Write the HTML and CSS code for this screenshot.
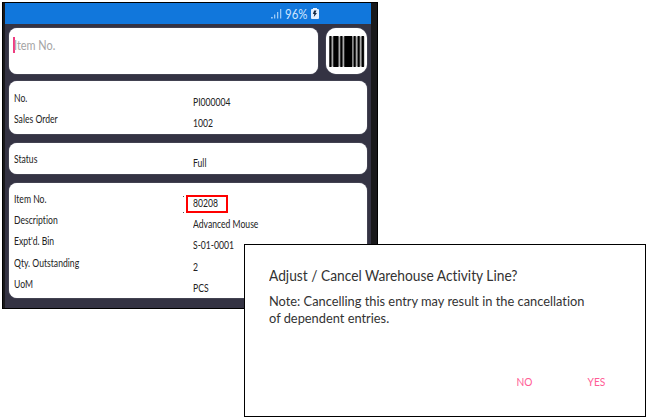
FILE: index.html
```
<!DOCTYPE html>
<html lang="en">
<head>
<meta charset="utf-8">
<title>Warehouse Activity</title>
<link rel="stylesheet" href="styles.css">
</head>
<body>
<main class="phone">
  <div class="screen">
    <header class="status-bar">
      <svg class="signal" width="11" height="11" viewBox="0 0 11 11"><path d="M0 9h1.800v1.500H0z"/><path d="M3 6.500h1.300v4H3zM6 4h1.300v6.500H6zM9 1h1.300v9.500H9z"/></svg>
      <span class="percent">96%</span>
      <svg class="battery" width="8" height="11" viewBox="0 0 8 11"><path d="M2 0h4v1h1.300l.7.7v8.600l-.7.7H.7L0 10.300V1.700L.7 1H2z"/><path class="bolt" d="M5.500 2.500H3.200L1.800 6h1.500l-.5 3L6 5H4.400z"/></svg>
    </header>
    <div class="content">
      <div class="search">
        <div class="field"><i class="caret"></i><span class="placeholder">Item No.</span></div>
        <button class="scan" aria-label="Scan">
          <svg width="36" height="31" viewBox="0 0 36 31"><path fill="#aaa" d="M0 .5h35.500v30H0z"/><path d="M.4 0h2.100v31H.4zM4.300 0h5.200v31H4.300zM11.300 0h2.200v31h-2.200zM15.300 0h7.900v31h-7.900zM24.600 0h2.100v31h-2.100zM28.600 0h2.100v31h-2.100zM32.600 0h2.300v31h-2.300z"/></svg>
        </button>
      </div>
      <section class="card order">
        <div class="row"><span>No.</span><b>PI000004</b></div>
        <div class="row"><span>Sales Order</span><b>1002</b></div>
      </section>
      <section class="card state">
        <div class="row"><span>Status</span><b>Full</b></div>
      </section>
      <section class="card item">
        <div class="row"><span>Item No.</span><div class="marked"><b>80208</b></div></div>
        <div class="row"><span>Description</span><b>Advanced Mouse</b></div>
        <div class="row"><span>Expt'd. Bin</span><b>S-01-0001</b></div>
        <div class="row"><span>Qty. Outstanding</span><b>2</b></div>
        <div class="row"><span>UoM</span><b>PCS</b></div>
      </section>
    </div>
  </div>
</main>
<div class="dialog" role="dialog">
  <h1>Adjust / Cancel Warehouse Activity Line?</h1>
  <p>Note: Cancelling this entry may result in the cancellation<br>of dependent entries.</p>
  <div class="actions"><button>NO</button><button>YES</button></div>
</div>
</body>
</html>
```
FILE: styles.css
```
* { box-sizing: border-box; }
body {
  margin: 0;
  padding: 2px;
  width: 647px;
  height: 418px;
  overflow: hidden;
  background: #fff;
  font-family: Lato, "Liberation Sans", sans-serif;
  font-variant-ligatures: none;
}
button { border: 0; padding: 0; background: none; font: inherit; }
svg { display: block; }
.phone {
  width: 376px;
  height: 307px;
  border: 1px solid #000;
  padding: 0 6px 0 2px;
  background: #19191b;
}
.screen { height: 305px; background: #343343; }
.status-bar {
  display: flex;
  align-items: center;
  height: 21px;
  padding-left: 266px;
  background: #1177dc;
  color: #cfe6ff;
}
.signal { fill: #9cc9f6; }
.percent {
  width: 22px;
  margin: 0 4px 0 3px;
  font-size: 13px;
  white-space: nowrap;
  transform: scaleX(.88);
  transform-origin: left;
}
.battery { fill: #e2efff; }
.battery .bolt { fill: #162b45; }
.content { padding: 4px 3px 0 4px; }
.search { display: flex; gap: 8px; height: 46px; }
.field, .scan, .card { background: #fff; border-radius: 8px; box-shadow: 0 0 1px #c8c8d4; }
.field { display: flex; width: 309px; padding: 9px 4px; }
.caret { width: 1.500px; height: 16px; background: #ee3d80; }
.placeholder {
  margin-left: -1px;
  font-size: 13px;
  line-height: 17px;
  color: #a5a5a5;
  transform: scaleX(.84);
  transform-origin: left;
}
.scan { display: flex; align-items: center; justify-content: center; width: 41px; border-radius: 10px; }
.card { width: 358px; padding-left: 5px; color: #222; }
.order { height: 53px; margin-top: 7px; padding-top: 7px; }
.state { height: 31px; margin-top: 9px; padding-top: 6px; }
.item { height: 115px; margin-top: 9px; padding-top: 6px; }
.row { display: flex; height: 21.200px; font-size: 10.500px; line-height: 21px; }
.row span { width: 179px; transform: scaleX(.82); transform-origin: left; }
.row b {
  display: block;
  padding-top: 4px;
  font-weight: 400;
  white-space: nowrap;
  transform: scaleX(.82);
  transform-origin: left;
}
.marked { position: relative; }
.marked::before {
  content: "";
  position: absolute;
  left: -10px;
  top: 7px;
  width: 1px;
  height: 17px;
  background: linear-gradient(#555 1px, transparent 1px 16px, #555 16px);
}
.marked::after {
  content: "";
  position: absolute;
  box-sizing: border-box;
  left: -7px;
  top: 6px;
  width: 42px;
  height: 18px;
  border: 2px solid #f00;
}
.dialog {
  position: absolute;
  left: 244px;
  top: 244px;
  width: 402px;
  height: 173px;
  padding: 20px 24px 0;
  border: 1px solid #000;
  background: #fff;
  color: #333;
}
h1 {
  margin: 0;
  font-size: 15.500px;
  line-height: 20px;
  font-weight: 400;
  white-space: nowrap;
  transform: scaleX(.888);
  transform-origin: left;
}
p {
  margin: 8px 0 0;
  font-size: 13.500px;
  line-height: 17px;
  white-space: nowrap;
  transform: scaleX(.95);
  transform-origin: left;
}
.actions { display: flex; justify-content: flex-end; gap: 52px; margin-top: 46px; padding-right: 14px; }
.actions button { font-size: 12px; line-height: 18px; color: #ff5c96; transform: scaleX(.85); }
```
